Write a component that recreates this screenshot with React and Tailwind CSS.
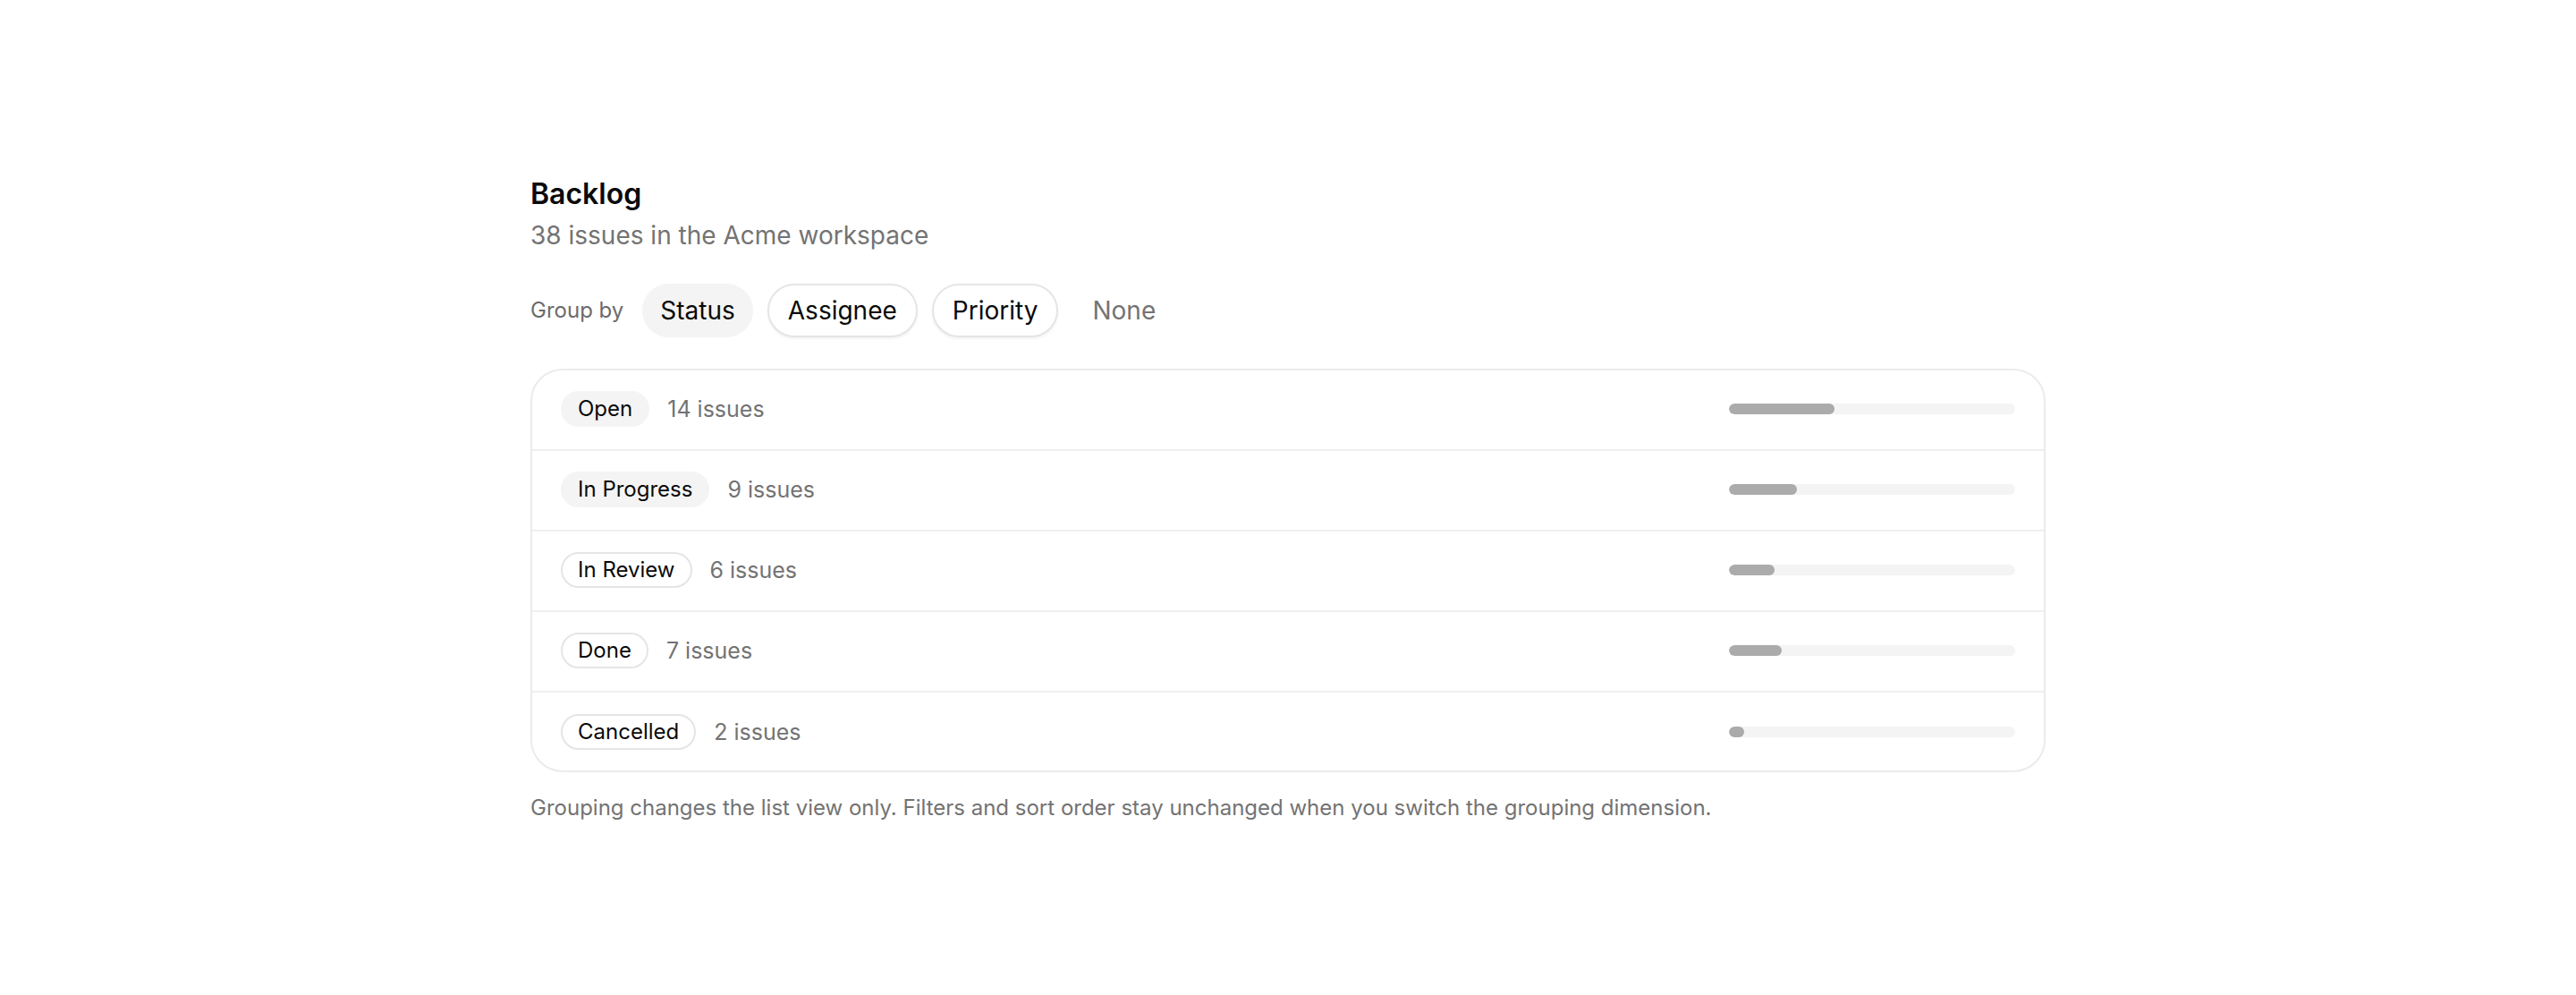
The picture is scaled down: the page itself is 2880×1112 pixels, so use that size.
export default function App() {
  const rows = [
    { label: 'Open', count: 14, filled: true },
    { label: 'In Progress', count: 9, filled: true },
    { label: 'In Review', count: 6, filled: false },
    { label: 'Done', count: 7, filled: false },
    { label: 'Cancelled', count: 2, filled: false },
  ];
  const total = 38;
  return (
    <div className="min-h-screen bg-white flex justify-center font-['Inter',sans-serif] text-[#0a0a0a]">
      <div className="w-[1694px] pt-[193px]">
        <h2 className="text-[32px] leading-[48px] font-semibold">Backlog</h2>
        <p className="mt-[2px] text-[28px] leading-[40px] text-[#737373]">38 issues in the Acme workspace</p>
        <div className="mt-[34px] flex items-center gap-[16px]">
          <span className="text-[24px] leading-[32px] text-[#6b6b6b] mr-[5px]">Group by</span>
          <button className="rounded-full border-2 border-[#f4f4f4] bg-[#f4f4f4] px-[18px] py-[8px] text-[28px] leading-[40px]">Status</button>
          <button className="rounded-full border-2 border-[#e5e5e5] bg-white px-[21px] py-[8px] text-[28px] leading-[40px] shadow-[0_2px_3px_rgba(0,0,0,0.05)]">Assignee</button>
          <button className="rounded-full border-2 border-[#e5e5e5] bg-white px-[21px] py-[8px] text-[28px] leading-[40px] shadow-[0_2px_3px_rgba(0,0,0,0.05)]">Priority</button>
          <button className="rounded-full border-2 border-transparent px-[20px] py-[8px] text-[28px] leading-[40px] text-[#737373]">None</button>
        </div>
        <div className="mt-[35px] rounded-[36px] border-2 border-[#ebebeb] overflow-hidden">
          {rows.map((r, i) => (
            <div
              key={r.label}
              className={`flex items-center justify-between px-[32px] ${i < rows.length - 1 ? 'h-[90px] pb-[2px] border-b-2 border-[#efefef]' : 'h-[87px]'}`}
            >
              <div className="flex items-center gap-[20px]">
                <span
                  className={`rounded-full border-2 px-[17px] h-[40px] flex items-center text-[24px] leading-[32px] ${
                    r.filled ? 'bg-[#f4f4f4] border-[#f4f4f4]' : 'bg-white border-[#e5e5e5]'
                  }`}
                >
                  {r.label}
                </span>
                <span className="text-[25px] leading-[32px] text-[#737373]">{r.count} issues</span>
              </div>
              <div className="w-[320px] h-[12px] rounded-full bg-[#f4f4f4] overflow-hidden">
                <div className="h-full rounded-full bg-[#ababab]" style={{ width: `${(r.count / total) * 100}%` }} />
              </div>
            </div>
          ))}
        </div>
        <p className="mt-[24px] text-[24px] leading-[32px] text-[#737373]">
          Grouping changes the list view only. Filters and sort order stay unchanged when you switch the grouping dimension.
        </p>
      </div>
    </div>
  );
}
